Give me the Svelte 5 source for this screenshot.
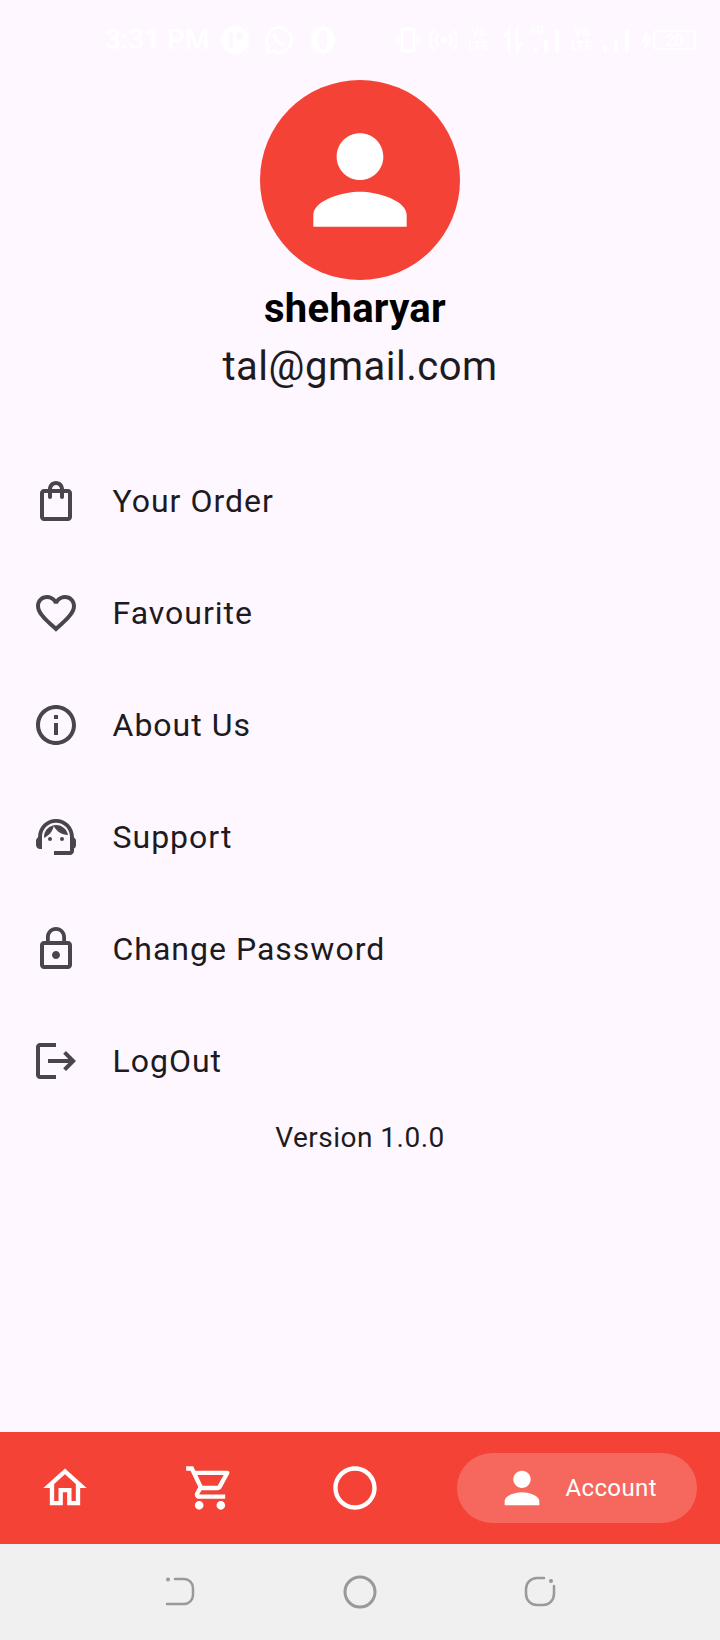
<script>
  const menu = [
    {
      label: "Your Order",
      d: "M18 6h-2c0-2.21-1.79-4-4-4S8 3.79 8 6H6c-1.1 0-2 .9-2 2v12c0 1.1.9 2 2 2h12c1.1 0 2-.9 2-2V8c0-1.1-.9-2-2-2zm-6-2c1.1 0 2 .9 2 2h-4c0-1.1.9-2 2-2zm6 16H6V8h2v2c0 .55.45 1 1 1s1-.45 1-1V8h4v2c0 .55.45 1 1 1s1-.45 1-1V8h2v12z",
    },
    {
      label: "Favourite",
      d: "M16.5 3c-1.74 0-3.41.81-4.5 2.09C10.91 3.81 9.24 3 7.5 3 4.42 3 2 5.42 2 8.5c0 3.78 3.4 6.86 8.55 11.54L12 21.35l1.45-1.32C18.6 15.36 22 12.28 22 8.5 22 5.42 19.58 3 16.5 3zm-4.4 15.55l-.1.1-.1-.1C7.14 14.24 4 11.39 4 8.5 4 6.5 5.5 5 7.5 5c1.54 0 3.04.99 3.57 2.36h1.87C13.46 5.99 14.96 5 16.5 5c2 0 3.5 1.5 3.5 3.5 0 2.89-3.14 5.74-7.9 10.05z",
    },
    {
      label: "About Us",
      d: "M11 7h2v2h-2zm0 4h2v6h-2zm1-9C6.48 2 2 6.48 2 12s4.48 10 10 10 10-4.48 10-10S17.52 2 12 2zm0 18c-4.41 0-8-3.59-8-8s3.59-8 8-8 8 3.59 8 8-3.59 8-8 8z",
    },
    {
      label: "Support",
      d: "M21 12.22C21 6.73 16.74 3 12 3c-4.69 0-9 3.65-9 9.28-.6.34-1 .98-1 1.72v2c0 1.1.9 2 2 2h1v-6.1c0-3.87 3.13-7 7-7s7 3.13 7 7V19h-8v2h8c1.1 0 2-.9 2-2v-1.22c.59-.31 1-.92 1-1.62v-2.3c0-.67-.41-1.28-1-1.64zM8 13a1 1 0 1 0 2 0a1 1 0 1 0-2 0zM14 13a1 1 0 1 0 2 0a1 1 0 1 0-2 0zM18 11.03C17.52 8.18 15.04 6 12.05 6c-3.03 0-6.29 2.51-6.03 6.45 2.47-1.01 4.33-3.21 4.86-5.89 1.31 2.63 4 4.44 7.12 4.47z",
    },
    {
      label: "Change Password",
      d: "M12 17c1.1 0 2-.9 2-2s-.9-2-2-2-2 .9-2 2 .9 2 2 2zm6-9h-1V6c0-2.76-2.24-5-5-5S7 3.24 7 6v2H6c-1.1 0-2 .9-2 2v10c0 1.1.9 2 2 2h12c1.1 0 2-.9 2-2V10c0-1.1-.9-2-2-2zM8.9 6c0-1.71 1.39-3.1 3.1-3.1s3.1 1.39 3.1 3.1v2H8.9V6zM18 20H6V10h12v10z",
    },
    {
      label: "LogOut",
      d: "M17 7l-1.41 1.41L18.17 11H8v2h10.17l-2.58 2.58L17 17l5-5zM4 5h8V3H4c-1.1 0-2 .9-2 2v14c0 1.1.9 2 2 2h8v-2H4V5z",
    },
  ];

  const person = "M12 12c2.21 0 4-1.79 4-4s-1.79-4-4-4-4 1.79-4 4 1.79 4 4 4zm0 2c-2.67 0-8 1.34-8 4v2h16v-2c0-2.66-5.33-4-8-4z";
  const navIcons = [
    "M12 5.69l5 4.5V18h-2v-6H9v6H7v-7.81l5-4.5M12 3L2 12h3v8h6v-6h2v6h6v-8h3L12 3z",
    "M15.55 13c.75 0 1.41-.41 1.75-1.03l3.58-6.49c.37-.66-.11-1.48-.87-1.48H5.21l-.94-2H1v2h2l3.6 7.59-1.35 2.44C4.52 15.37 5.48 17 7 17h12v-2H7l1.1-2h7.45zM6.16 6h12.15l-2.76 5H8.53L6.16 6zM7 18c-1.1 0-1.99.9-1.99 2S5.9 22 7 22s2-.9 2-2-.9-2-2-2zm10 0c-1.1 0-1.99.9-1.99 2s.89 2 1.99 2 2-.9 2-2-.9-2-2-2z",
    "M12 2C6.47 2 2 6.47 2 12s4.47 10 10 10 10-4.47 10-10S17.53 2 12 2zm0 18c-4.41 0-8-3.59-8-8s3.59-8 8-8 8 3.59 8 8-3.59 8-8 8z",
  ];
</script>

<div class="screen">
  <div class="status">
    <span class="time">3:31 PM</span>
    <div class="st-left">
      <svg width="30" height="30" viewBox="0 0 30 30"><path fill="#fff" fill-rule="evenodd" d="M15 1a14 14 0 1 0 0 28a14 14 0 1 0 0-28zM9 7h4v16h-2a2 2 0 0 1-2-2zM19.500 7a4 4 0 1 1 0 8a4 4 0 1 1 0-8z"/></svg>
      <svg width="30" height="30" viewBox="0 0 30 30"><path d="M15 2.500a12.500 12.500 0 0 1 0 25c-2.200 0-4.200-.6-6-1.600l-6 1.600 1.600-5.800a12.500 12.500 0 0 1 10.400-19.200z" fill="none" stroke="#fff" stroke-width="2.500"/><path d="M10.500 9c0 6 4.500 10.500 10 10.500" fill="none" stroke="#fff" stroke-width="3.500"/></svg>
      <svg width="30" height="30" viewBox="0 0 30 30"><path fill="#fff" fill-rule="evenodd" d="M15 1.500c-7 0-12 6-12 13.500s5 13.500 12 13.500 12-6 12-13.500-5-13.500-12-13.500zM15 5c2.500 0 4.500 4.500 4.500 10s-2 10-4.500 10-4.500-4.500-4.500-10 2-10 4.500-10z"/></svg>
    </div>
    <div class="st-right">
      <svg width="26" height="30" viewBox="0 0 26 30"><rect x="7" y="4" width="12" height="22" rx="2" fill="none" stroke="#fff" stroke-width="2.500"/><path d="M1 12v6M4 10v10M22 10v10M25 12v6" stroke="#fff" stroke-width="2"/></svg>
      <svg class="m9" width="27" height="30" viewBox="0 0 27 30"><circle cx="13.500" cy="15" r="3" fill="#fff"/><path d="M8 9a9 9 0 0 0 0 12M19 9a9 9 0 0 1 0 12M4 5a15 15 0 0 0 0 20M23 5a15 15 0 0 1 0 20" fill="none" stroke="#fff" stroke-width="2"/></svg>
      <span class="lte m9">Vo<br />LTE</span>
      <svg class="m12" width="20" height="30" viewBox="0 0 20 30"><path d="M6 27V5l-5 7M14 3v22l5-7" fill="none" stroke="#fff" stroke-width="2.500"/></svg>
      <div class="signal m7">
        <span>4G</span>
        <svg width="31" height="30" viewBox="0 0 31 30"><path d="M4 27h3v-4H4zM14 27h4V15h-4zM25 27h4V5h-4z" fill="#fff"/></svg>
      </div>
      <span class="lte m8">Vo<br />LTE</span>
      <svg class="m8" width="28" height="30" viewBox="0 0 28 30"><path d="M1 27h4v-6H1zM12 27h4V15h-4zM23 27h4V5h-4z" fill="#fff"/></svg>
      <svg class="m11" width="10" height="30" viewBox="0 0 10 30"><path d="M6 5L0 17h4l-1 9 7-13H5.500z" fill="#fff"/></svg>
      <span class="battery">20</span>
    </div>
  </div>

  <header class="profile">
    <div class="avatar">
      <svg width="140" height="140" viewBox="0 0 24 24"><path d={person} fill="#fff" /></svg>
    </div>
    <div class="name">sheharyar</div>
    <div class="email">tal@gmail.com</div>
  </header>

  <ul class="menu">
    {#each menu as item}
      <li>
        <svg width="48" height="48" viewBox="0 0 24 24"><path d={item.d} fill="#49454f" /></svg>
        <span>{item.label}</span>
      </li>
    {/each}
  </ul>

  <div class="version">Version 1.0.0</div>

  <nav class="tabs">
    <div class="icons">
      {#each navIcons as d}
        <svg width="52" height="52" viewBox="0 0 24 24"><path {d} fill="#fff" /></svg>
      {/each}
    </div>
    <div class="pill">
      <svg width="52" height="52" viewBox="0 0 24 24"><path d={person} fill="#fff" /></svg>
      <span>Account</span>
    </div>
  </nav>

  <div class="sysnav">
    <svg width="32" height="32" viewBox="0 0 32 32"><circle cx="4" cy="3.500" r="2" fill="#999" /><path d="M11 3h9a9 9 0 0 1 9 9v7a9 9 0 0 1-9 9H3" fill="none" stroke="#999" stroke-width="2.500" stroke-linecap="round" /></svg>
    <svg width="34" height="34" viewBox="0 0 34 34"><circle cx="17" cy="17" r="15" fill="none" stroke="#999" stroke-width="3" /></svg>
    <svg width="32" height="32" viewBox="0 0 32 32"><circle cx="27" cy="5" r="2" fill="#999" /><path d="M20 2h-7a11 11 0 0 0-11 11v5a11 11 0 0 0 11 11h6a11 11 0 0 0 11-11v-8" fill="none" stroke="#999" stroke-width="2.500" stroke-linecap="round" /></svg>
  </div>
</div>

<style>
  :global(body) {
    margin: 0;
    background: #fef7ff;
  }

  .screen {
    width: 720px;
    height: 1640px;
    display: flex;
    flex-direction: column;
    background: #fef7ff;
    font-family: Roboto, sans-serif;
    overflow: hidden;
  }

  .status {
    height: 80px;
    box-sizing: border-box;
    padding: 25px 0 0 105px;
    display: flex;
    align-items: flex-start;
    color: #fff;
  }

  .time {
    width: 115px;
    font-size: 28px;
    line-height: 30px;
    font-weight: 500;
    white-space: nowrap;
  }

  .st-left {
    display: flex;
    gap: 14px;
  }

  .st-right {
    margin-left: 57px;
    display: flex;
    align-items: flex-start;
  }

  .st-right svg,
  .st-left svg {
    flex-shrink: 0;
  }

  .m7 {
    margin-left: 7px;
  }

  .m8 {
    margin-left: 8px;
  }

  .m9 {
    margin-left: 9px;
  }

  .m11 {
    margin-left: 11px;
  }

  .m12 {
    margin-left: 12px;
  }

  .lte {
    width: 25px;
    font-size: 13px;
    line-height: 14px;
    font-weight: 700;
    text-align: center;
  }

  .signal {
    position: relative;
    width: 31px;
    height: 30px;
  }

  .signal span {
    position: absolute;
    left: 0;
    top: 0;
    font-size: 11px;
    line-height: 11px;
    font-weight: 700;
  }

  .battery {
    width: 43px;
    height: 20px;
    margin: 5px 0 0 2px;
    border: 2px solid #fff;
    border-radius: 4px;
    box-sizing: border-box;
    font-size: 16px;
    line-height: 17px;
    font-weight: 500;
    text-align: center;
  }

  .profile {
    display: flex;
    flex-direction: column;
    align-items: center;
  }

  .avatar {
    width: 200px;
    height: 200px;
    border-radius: 50%;
    background: #f44336;
    display: flex;
    align-items: center;
    justify-content: center;
  }

  .name {
    margin-top: 4px;
    padding-right: 10px;
    font-size: 40px;
    line-height: 50px;
    letter-spacing: 0.3px;
    font-weight: 700;
    color: #000;
  }

  .email {
    margin-top: 5px;
    font-size: 40px;
    line-height: 56px;
    letter-spacing: 0.5px;
    color: #1d1b20;
  }

  .menu {
    list-style: none;
    margin: 50px 0 0;
    padding: 0;
  }

  .menu li {
    height: 112px;
    padding-left: 32px;
    display: flex;
    align-items: center;
    gap: 32.5px;
  }

  .menu span {
    font-size: 32px;
    letter-spacing: 1px;
    color: #1d1b20;
  }

  .version {
    margin-top: 1px;
    text-align: center;
    font-size: 28px;
    line-height: 40px;
    letter-spacing: 0.5px;
    color: #1d1b20;
  }

  .tabs {
    margin-top: auto;
    height: 112px;
    box-sizing: border-box;
    padding: 0 23px 0 38.5px;
    background: #f44336;
    display: flex;
    align-items: center;
    justify-content: space-between;
  }

  .icons {
    display: flex;
    gap: 93px;
  }

  .tabs svg {
    flex-shrink: 0;
  }

  .pill {
    height: 70px;
    padding: 0 40px 0 39px;
    border-radius: 35px;
    background: rgba(255, 255, 255, 0.2);
    display: flex;
    align-items: center;
    gap: 17px;
  }

  .pill span {
    font-size: 24px;
    letter-spacing: 0.4px;
    color: #fff;
  }

  .sysnav {
    height: 96px;
    background: #f0f0f0;
    display: flex;
    align-items: center;
    justify-content: center;
    gap: 147px;
  }
</style>
